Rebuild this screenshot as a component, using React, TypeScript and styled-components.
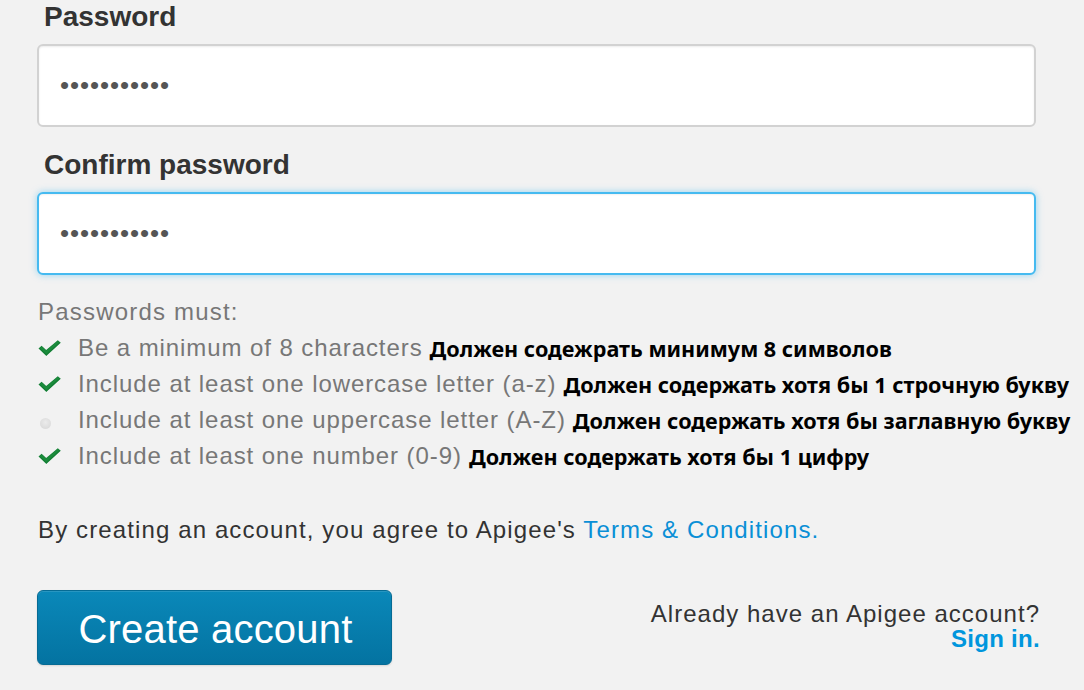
import React from "react";
import styled, { createGlobalStyle } from "styled-components";

const Global = createGlobalStyle`
  html, body {
    margin: 0;
    padding: 0;
    background: #f2f2f2;
    overflow: hidden;
  }
  body {
    font-family: "Liberation Sans", Arial, Helvetica, sans-serif;
    width: 1084px;
    height: 690px;
  }
`;

const Form = styled.form`
  display: flex;
  flex-direction: column;
  width: 999px;
  padding-left: 37px;
  box-sizing: content-box;
`;

const Label = styled.label<{ $gap: number }>`
  display: block;
  margin: ${(p) => p.$gap}px 0 0 7px;
  font-size: 28px;
  line-height: 32px;
  font-weight: 700;
  color: #333;
`;

const Field = styled.input<{ $focused?: boolean }>`
  display: block;
  box-sizing: border-box;
  width: 999px;
  height: 83px;
  margin-top: 11px;
  padding: 0 0 0 21px;
  border: 2px solid ${(p) => (p.$focused ? "#45baf0" : "#d2d2d2")};
  border-radius: 6px;
  background: #fff;
  box-shadow: ${(p) =>
    p.$focused
      ? "0 0 7px rgba(69,186,240,0.55), inset 0 1px 2px rgba(0,0,0,0.06)"
      : "inset 0 1px 2px rgba(0,0,0,0.08)"};
  font-family: "Liberation Sans", Arial, sans-serif;
  font-size: 26px;
  letter-spacing: 0.9px;
  color: #555;
  outline: none;
`;

const Rules = styled.div`
  margin-top: 19px;
  display: flex;
  flex-direction: column;
`;

const RulesTitle = styled.div`
  font-size: 24px;
  line-height: 36px;
  letter-spacing: 1.2px;
  color: #777;
  margin-left: 1px;
`;

const RuleRow = styled.div`
  display: flex;
  align-items: center;
  height: 36px;
  white-space: nowrap;
`;

const IconBox = styled.span`
  display: flex;
  align-items: center;
  justify-content: flex-start;
  width: 41px;
  flex: none;
  height: 36px;
`;

const RuleText = styled.span`
  font-size: 24px;
  line-height: 36px;
  letter-spacing: 0.92px;
  color: #777;
`;

const RuText = styled.span`
  font-family: "Noto Sans", "DejaVu Sans", sans-serif;
  font-weight: 700;
  font-size: 21.6px;
  line-height: 36px;
  color: #000;
  margin-left: 7px;
  position: relative;
  top: 1px;
`;

const Dot = styled.span`
  display: block;
  width: 11px;
  height: 11px;
  margin-left: 3px;
  margin-top: 6px;
  border-radius: 50%;
  background: radial-gradient(circle at 50% 40%, #ebebeb 0%, #dcdcdc 70%, #e8e8e8 100%);
`;

const Terms = styled.p`
  margin: 38px 0 0 1px;
  font-size: 24px;
  line-height: 36px;
  letter-spacing: 1.12px;
  color: #333;
`;

const Link = styled.a`
  color: #0a8fd6;
  text-decoration: none;
`;

const Footer = styled.div`
  display: flex;
  justify-content: space-between;
  align-items: flex-start;
  margin-top: 42px;
  margin-right: -4px;
`;

const Button = styled.button`
  box-sizing: border-box;
  width: 355px;
  height: 75px;
  padding: 3px 0 0 2px;
  border: 1px solid #066b94;
  border-radius: 6px;
  background: linear-gradient(#0a88b9, #0473a1);
  box-shadow: inset 0 1px 0 rgba(255, 255, 255, 0.12), 0 1px 2px rgba(0, 0, 0, 0.12);
  color: #fff;
  font-family: "Liberation Sans", Arial, sans-serif;
  font-size: 40px;
  letter-spacing: 0.2px;
  line-height: 44px;
  cursor: pointer;
`;

const SignIn = styled.div`
  margin-top: 11px;
  text-align: right;
  font-size: 24px;
  line-height: 25px;
  letter-spacing: 1.02px;
  color: #333;
`;

const SignInLink = styled.a`
  display: block;
  font-weight: 700;
  letter-spacing: 0.3px;
  color: #0096dd;
  text-decoration: none;
`;

const Check = () => (
  <svg width="25" height="18" viewBox="0 0 25 18">
    <path d="M1.5 9.6 L4.6 6.8 L9.2 10.9 L20.8 1.2 L23.8 3.8 L9.3 17 Z" fill="#fff" opacity="0.7" transform="translate(0 0.8)" />
    <path d="M1.5 9.6 L4.6 6.8 L9.2 10.9 L20.8 1.2 L23.8 3.8 L9.3 17 Z" fill="#157f36" />
    <path d="M4.6 7.6 L9.2 11.7 L20.8 2 L22.2 3.2 L9.3 15 L3 9.2 Z" fill="#1f9441" opacity="0.6" />
  </svg>
);

const rules = [
  { ok: true, en: "Be a minimum of 8 characters", ru: "Должен содежрать минимум 8 символов" },
  { ok: true, en: "Include at least one lowercase letter (a-z)", ru: "Должен содержать хотя бы 1 строчную букву" },
  { ok: false, en: "Include at least one uppercase letter (A-Z)", ru: "Должен содержать хотя бы заглавную букву" },
  { ok: true, en: "Include at least one number (0-9)", ru: "Должен содержать хотя бы 1 цифру" },
];

export default function App() {
  return (
    <>
      <Global />
      <Form onSubmit={(e) => e.preventDefault()}>
        <Label $gap={1} htmlFor="pw">Password</Label>
        <Field id="pw" type="password" readOnly value="12345678901" />
        <Label $gap={22} htmlFor="pw2">Confirm password</Label>
        <Field id="pw2" type="password" readOnly value="12345678901" $focused />
        <Rules>
          <RulesTitle>Passwords must:</RulesTitle>
          {rules.map((r) => (
            <RuleRow key={r.en}>
              <IconBox>{r.ok ? <Check /> : <Dot />}</IconBox>
              <RuleText>{r.en}</RuleText>
              <RuText>{r.ru}</RuText>
            </RuleRow>
          ))}
        </Rules>
        <Terms>
          By creating an account, you agree to Apigee's <Link href="#">Terms &amp; Conditions.</Link>
        </Terms>
        <Footer>
          <Button type="submit">Create account</Button>
          <SignIn>
            Already have an Apigee account?
            <SignInLink href="#">Sign in.</SignInLink>
          </SignIn>
        </Footer>
      </Form>
    </>
  );
}
